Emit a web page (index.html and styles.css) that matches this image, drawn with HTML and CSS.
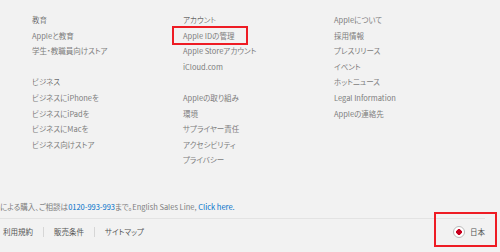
FILE: index.html
```html
<!DOCTYPE html>
<html lang="ja">
<head>
    <meta charset="UTF-8">
    <meta name="viewport" content="width=device-width, initial-scale=1.0">
    <title>Apple フッター</title>
    <link rel="stylesheet" href="styles.css">
</head>
<body>

    <footer class="pie">
        <div class="directorio">
            <div class="columna">
                <ul class="seccion">
                    <li class="titulo">教育</li>
                    <li><a href="#">Appleと教育</a></li>
                    <li><a href="#">学生・教職員向けストア</a></li>
                </ul>
                <ul class="seccion">
                    <li class="titulo">ビジネス</li>
                    <li><a href="#">ビジネスにiPhoneを</a></li>
                    <li><a href="#">ビジネスにiPadを</a></li>
                    <li><a href="#">ビジネスにMacを</a></li>
                    <li><a href="#">ビジネス向けストア</a></li>
                </ul>
            </div>
            <div class="columna">
                <ul class="seccion">
                    <li class="titulo">アカウント</li>
                    <li><a href="#" class="marcado">Apple IDの管理</a></li>
                    <li><a href="#">Apple Storeアカウント</a></li>
                    <li><a href="#">iCloud.com</a></li>
                </ul>
                <ul class="seccion">
                    <li><a href="#">Appleの取り組み</a></li>
                    <li><a href="#">環境</a></li>
                    <li><a href="#">サプライヤー責任</a></li>
                    <li><a href="#">アクセシビリティ</a></li>
                    <li><a href="#">プライバシー</a></li>
                </ul>
            </div>
            <div class="columna">
                <ul class="seccion">
                    <li><a href="#">Appleについて</a></li>
                    <li><a href="#">採用情報</a></li>
                    <li><a href="#">プレスリリース</a></li>
                    <li><a href="#">イベント</a></li>
                    <li><a href="#">ホットニュース</a></li>
                    <li><a href="#">Legal Information</a></li>
                    <li><a href="#">Appleの連絡先</a></li>
                </ul>
            </div>
        </div>

        <p class="compra">による購入、ご相談は<a href="#">0120-993-993</a>まで。English Sales Line, <a href="#">Click here.</a></p>

        <div class="barra">
            <ul class="legales">
                <li><a href="#">利用規約</a></li>
                <li><a href="#">販売条件</a></li>
                <li><a href="#">サイトマップ</a></li>
            </ul>
            <!-- Selector de país -->
            <a href="#" class="pais marcado-pais">
                <span class="bandera"></span>
                <span>日本</span>
            </a>
        </div>
    </footer>

</body>
</html>
```

FILE: styles.css
```css
body {
    font-family: "Noto Sans CJK JP", sans-serif;
    font-size: 7.5px;
    line-height: 15.6px;
    font-feature-settings: "palt";
    margin: 0;
    background-color: #f2f2f2;
    color: #7d7d7d;
}
a {
    color: #7d7d7d;
    text-decoration: none;
}
ul {
    list-style: none;
    margin: 0;
    padding: 0;
}
.pie {
    padding: 12px 15px 20px 0;
}
.directorio {
    display: grid;
    grid-template-columns: 151px 151px 151px;
    padding-left: 32px;
}
.seccion {
    margin-bottom: 15.6px;
}
.titulo {
    color: #333;
    font-weight: 300;
}
/* Recuadro rojo de anotación */
.marcado {
    position: relative;
}
.marcado::after {
    content: "";
    position: absolute;
    left: -11px;
    right: -14px;
    top: -4px;
    bottom: -4px;
    border: 2px solid #ee1c24;
}
.compra {
    margin: 15px 0 4.3px;
    white-space: nowrap;
}
.compra a {
    color: #0070c9;
}
.barra {
    display: flex;
    justify-content: space-between;
    align-items: center;
    border-top: 1px solid #e3e3e3;
    padding-top: 4.7px;
}
.legales {
    display: flex;
    padding-left: 3px;
}
.legales li {
    padding: 0 10px;
    border-left: 1px solid #d6d6d6;
    line-height: 10px;
}
.legales li:first-child {
    padding-left: 0;
    border-left: none;
}
.legales a {
    color: #555;
}
.pais {
    display: flex;
    align-items: center;
    gap: 5px;
    height: 16px;
    position: relative;
    color: #555;
}
.bandera {
    width: 10px;
    height: 10px;
    border: 1px solid #bbb;
    border-radius: 50%;
    background: radial-gradient(circle, #c8001e 0 2.6px, #fff 3px);
}
.marcado-pais::after {
    content: "";
    position: absolute;
    left: -19px;
    right: -12px;
    top: -12px;
    height: 35px;
    box-sizing: border-box;
    border: 2px solid #ee1c24;
}
```
